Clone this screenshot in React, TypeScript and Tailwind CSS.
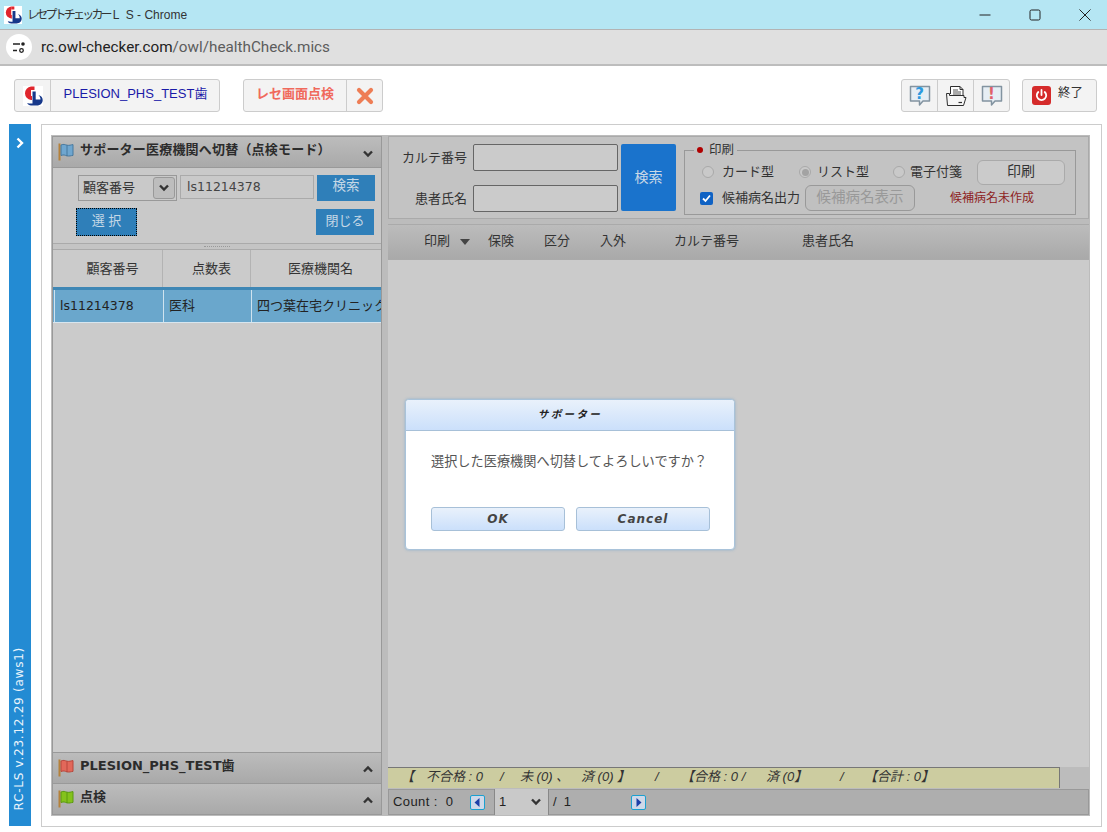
import React from "react";

const jp = "font-['Liberation_Sans','Noto_Sans_CJK_JP',sans-serif]";

function Logo({ size = 20 }: { size?: number }) {
  return (
    <svg width={size} height={size} viewBox="0 0 20 20">
      <rect width="20" height="20" fill="#fff" />
      <path d="M8 0.500A6.800 6.800 0 0 0 8 14z" fill="#e0252c" />
      <path d="M8 .5h3.500v3.500H8zM8 10h1v4H8z" fill="#e0252c" />
      <path d="M9.500 5.500h3.200v8h4.800c0-2-.8-3.500-2.200-4.500 2.800.6 4.400 2.600 4.400 5 0 3.400-2.600 5.500-5.700 5.500H8c-1.800 0-3.200-1-3.800-2.500 2 .6 3.800.6 5.300.4z" fill="#16388a" />
    </svg>
  );
}

function Flag({ color, dark }: { color: string; dark: string }) {
  return (
    <svg width="18" height="18" viewBox="0 0 18 18" className="shrink-0">
      <path d="M1.500 0.500v17" stroke="#b5813a" strokeWidth="2" />
      <path d="M3 2c3-1.200 3.500-.4 6 .2 2.400.5 4-.4 6-.6v10.800c-2 .2-3.600 1-6 .4-2.500-.6-3-1.400-6-.3z" fill={color} />
      <path d="M9 2.200v11M3 2c3-1.200 3.500-.4 6 .2 2.400.5 4-.4 6-.6v10.800c-2 .2-3.600 1-6 .4-2.500-.6-3-1.400-6-.3z" fill="none" stroke={dark} strokeWidth="1" />
    </svg>
  );
}

function Chevron({ up = false }: { up?: boolean }) {
  return (
    <svg width="12" height="8" viewBox="0 0 12 8">
      <path d={up ? "M2 6.500l4-4 4 4" : "M2 1.500l4 4 4-4"} fill="none" stroke="#333" strokeWidth="2.400" />
    </svg>
  );
}

function Bubble({ mark, color }: { mark: string; color: string }) {
  return (
    <span className="relative flex h-[22px] w-[22px]">
      <svg width="22" height="22" viewBox="0 0 22 22">
        <path d="M1.500 1.500h19v14.500h-6.500l-3.500 4v-4h-9z" fill="#e6eef4" stroke="#8293a0" strokeWidth="1.500" strokeLinejoin="round" />
      </svg>
      <span className={`absolute left-0 right-0 top-[-2px] text-center text-[15px] font-bold ${color} font-['DejaVu_Sans',sans-serif]`}>{mark}</span>
    </span>
  );
}

function Printer() {
  return (
    <svg width="22" height="22" viewBox="0 0 22 22" fill="none" stroke="#2e2e2e" strokeWidth="1">
      <path d="M5.500 9V1.500h9.500l3 3v6" fill="#fff" />
      <path d="M15 1.500v3h3" />
      <path d="M8 5h5M8 7h8M8 9h8" stroke="#555" />
      <path d="M1.500 8.500h3v2h14.500v2h2l-2.500 8h-16z" fill="#f6f6f6" />
      <path d="M13.500 17.500h3.500" strokeWidth="1.200" />
    </svg>
  );
}

function Arrow({ right = false }: { right?: boolean }) {
  return (
    <span className="flex h-[15px] w-[15px] items-center justify-center rounded-[2px] border border-[#1ba0d0] bg-[#cfd8e8]">
      <svg width="7" height="9" viewBox="0 0 7 9">
        <path d={right ? "M1.500 0l5 4.500-5 4.500z" : "M5.500 0l-5 4.500 5 4.500z"} fill="#1d3fa8" />
      </svg>
    </span>
  );
}

function Radio({ checked = false }: { checked?: boolean }) {
  return (
    <span className="flex h-[12px] w-[12px] shrink-0 items-center justify-center rounded-full border border-[#a9a9a9] bg-[#c9c9c9]">
      {checked && <span className="h-[7px] w-[7px] rounded-full bg-[#a3a3a3]" />}
    </span>
  );
}

function AccordionBar({ label, color, dark }: { label: string; color: string; dark: string }) {
  return (
    <div className="flex h-[31px] items-center border-t border-[#999] bg-gradient-to-b from-[#bcbcbc] to-[#a9a9a9] pl-[5px] pr-[7px]">
      <Flag color={color} dark={dark} />
      <span className={`ml-[4px] mt-[-4px] text-[13px] font-bold text-[#2c2c2c] font-['DejaVu_Sans','Noto_Sans_CJK_JP',sans-serif]`}>{label}</span>
      <span className="ml-auto mt-[1px]"><Chevron up /></span>
    </div>
  );
}

export default function App() {
  return (
    <div className={`relative h-[832px] w-[1107px] overflow-hidden bg-white ${jp}`}>
      {/* Window title */}
      <div className="flex h-[30px] items-center border-b border-[#b3b3b3] bg-[#b5e6f3] pl-[4px]">
        <Logo size={18} />
        <span className="ml-[5px] whitespace-pre text-[12px] text-[#333]">
          <span className="tracking-[-2.800px]">レセプトチェッカー</span>
          <span className="ml-[3px]">L  S - Chrome</span>
        </span>
        <div className="ml-auto flex items-center">
          <svg width="14" height="14" viewBox="0 0 14 14" className="mr-[36px]"><path d="M1.500 7h11" stroke="#222" strokeWidth="1" /></svg>
          <svg width="14" height="14" viewBox="0 0 14 14" className="mr-[36px]"><rect x="2" y="2" width="10" height="10" rx="1.500" fill="none" stroke="#222" strokeWidth="1" /></svg>
          <svg width="14" height="14" viewBox="0 0 14 14" className="mr-[15px]"><path d="M1.500 1.500l11 11M12.500 1.500l-11 11" stroke="#222" strokeWidth="1" /></svg>
        </div>
      </div>
      {/* Address */}
      <div className="flex h-[36px] items-center border-b-2 border-[#bdbdbd] bg-[#e0e0e0] pl-[6px]">
        <span className="flex h-[26px] w-[26px] items-center justify-center rounded-full bg-white">
          <svg width="14" height="14" viewBox="0 0 14 14" fill="none" stroke="#222" strokeWidth="1.300">
            <path d="M1 4h7M1 10.500h4" />
            <circle cx="11" cy="4" r="1.800" fill="#222" stroke="none" />
            <circle cx="9.500" cy="10.500" r="1.800" />
          </svg>
        </span>
        <span className="ml-[9px] font-['Roboto','Noto_Sans',sans-serif] text-[15.250px] text-[#5c5c5c]">
          <span className="text-[#222]">rc.owl-checker.com</span>/owl/healthCheck.mics
        </span>
      </div>
      {/* Toolbar */}
      <div className="flex h-[58px] items-start pl-[14px] pt-[13px]">
        <div className="flex h-[33px] w-[206px] rounded-[3px] border border-[#ccc] bg-[#f3f3f3]">
          <span className="flex w-[36px] items-center justify-center border-r border-[#ccc]"><Logo size={20} /></span>
          <span className="flex flex-1 items-center justify-center pb-[4px] pl-[1px] text-[13px] text-[#1a1aa8]">PLESION_PHS_TEST歯</span>
        </div>
        <div className="ml-[23px] flex h-[33px] w-[140px] rounded-[3px] border border-[#ccc] bg-[#f3f3f3]">
          <span className="flex w-[103px] items-center justify-center border-r border-[#ccc] pb-[4px] text-[13px] font-bold text-[#f0695c]">レセ画面点検</span>
          <span className="flex flex-1 items-center justify-center">
            <svg width="18" height="18" viewBox="0 0 18 18"><path d="M3 3l12 12M15 3L3 15" stroke="#ee7d55" strokeWidth="4.200" strokeLinecap="round" /></svg>
          </span>
        </div>
        <div className="ml-[518px] flex h-[33px] w-[109px] rounded-[3px] border border-[#ccc] bg-[#f3f3f3]">
          <span className="flex w-[36px] items-center justify-center border-r border-[#ccc]"><Bubble mark="?" color="text-[#2c9adf]" /></span>
          <span className="flex w-[36px] items-center justify-center border-r border-[#ccc]"><Printer /></span>
          <span className="flex flex-1 items-center justify-center"><Bubble mark="!" color="text-[#e0606a]" /></span>
        </div>
        <div className="ml-[12px] flex h-[33px] w-[75px] items-center rounded-[3px] border border-[#ccc] bg-[#f3f3f3] pl-[9px]">
          <span className="flex h-[19px] w-[19px] items-center justify-center rounded-[3px] bg-[#d52b2b]">
            <svg width="13" height="13" viewBox="0 0 13 13" fill="none" stroke="#fff" strokeWidth="1.800" strokeLinecap="round">
              <path d="M6.500 1v5M3.300 3a4.700 4.700 0 1 0 6.400 0" />
            </svg>
          </span>
          <span className="mb-[4px] ml-[7px] text-[12.500px] text-[#333]">終了</span>
        </div>
      </div>
      {/* Main */}
      <div className="flex h-[702px] pl-[9px]">
        <aside className="flex h-[702px] w-[22px] flex-col items-center justify-between bg-[#238bd3] pb-[16px] pt-[13px]">
          <svg width="8" height="12" viewBox="0 0 8 12"><path d="M1.500 1.500L6 6l-4.500 4.500" fill="none" stroke="#fff" strokeWidth="2.400" /></svg>
          <span className="mr-[3px] rotate-180 whitespace-nowrap text-[12px] tracking-[0.750px] text-[#eaf4fb] [writing-mode:vertical-rl] font-['DejaVu_Sans',sans-serif]">RC-LS v.23.12.29 (aws1)</span>
        </aside>
        <div className="ml-[10px] h-[703px] w-[1061px] border border-[#ccc] px-[9px] py-[10px]">
          <div className="flex h-[681px] w-[1039px] gap-[6px] bg-[#bcbcbc] p-[1px]">
            {/* Left panel */}
            <div className="flex h-[679px] w-[330px] flex-col border border-[#999] bg-[#cbcbcb]">
              <div className="flex h-[30px] items-center bg-gradient-to-b from-[#bcbcbc] to-[#a9a9a9] pl-[5px] pr-[7px]">
                <Flag color="#6fa6cf" dark="#47789e" />
                <span className="mb-[4px] ml-[4px] text-[13px] font-bold tracking-[0.200px] text-[#2c2c2c]">サポーター医療機関へ切替（点検モード）</span>
                <span className="ml-auto mt-[3px]"><Chevron /></span>
              </div>
              <div className="flex h-[76px] flex-col border-t border-[#999] bg-[#c9c9c9] pl-[23px] pr-[6px] pt-[7px]">
                <div className="flex items-start">
                  <div className="ml-[2px] flex h-[26px] w-[99px] items-center border border-[#999] pl-[4px]">
                    <span className="text-[13px] text-[#333]">顧客番号</span>
                    <span className="ml-auto mr-[1px] flex h-[22px] w-[22px] items-center justify-center rounded-[3px] border border-[#999] bg-[#bdbdbd]"><Chevron /></span>
                  </div>
                  <div className="ml-[3px] flex h-[24px] w-[134px] items-center border border-[#aaa] pl-[6px] font-['DejaVu_Sans',sans-serif] text-[12.500px] text-[#444]">ls11214378</div>
                  <button className="ml-[3px] h-[26px] w-[58px] bg-[#2f7fb9] pb-[4px] text-[13.500px] text-[#c5d8e6]">検索</button>
                </div>
                <div className="mt-[7px] flex items-start justify-between">
                  <button className="h-[28px] w-[61px] border border-dotted border-black bg-[#2f7fb9] pb-[3px] text-[13px] text-[#c5d8e6]">選 択</button>
                  <button className="mr-[1px] mt-[1px] h-[26px] w-[58px] bg-[#2f7fb9] pb-[3px] text-[13px] text-[#c5d8e6]">閉じる</button>
                </div>
              </div>
              <div className="flex h-[7px] items-center justify-center border-y border-[#aaa] bg-[#c4c4c4]">
                <span className="w-[26px] border-t border-dotted border-[#999]" />
              </div>
              <div className="flex h-[40px] border-b-[3px] border-[#3f87b5] bg-[#cbcbcb] text-center text-[13px] leading-[38px] text-[#333]">
                <span className="w-[110px] shrink-0 border-r border-[#b3b3b3] pl-[10px]">顧客番号</span>
                <span className="w-[88px] shrink-0 border-r border-[#b3b3b3] pl-[10px]">点数表</span>
                <span className="flex-1 pl-[9px]">医療機関名</span>
              </div>
              <div className="flex h-[33px] overflow-hidden border-b border-[#d8e6ef] bg-[#6aa7cc] text-[13px] leading-[32px] text-[#222]">
                <span className="ml-[1px] w-[110px] shrink-0 border-x border-[#cfe3ef] pl-[5px] font-['DejaVu_Sans',sans-serif] text-[12.500px]">ls11214378</span>
                <span className="w-[88px] shrink-0 border-r border-[#cfe3ef] pl-[5px]">医科</span>
                <span className="min-w-0 flex-1 whitespace-nowrap pl-[5px]">四つ葉在宅クリニック</span>
              </div>
              <div className="flex-1" />
              <AccordionBar label="PLESION_PHS_TEST歯" color="#e2685a" dark="#b8473c" />
              <AccordionBar label="点検" color="#84c21c" dark="#5b9a10" />
            </div>
            {/* Right panel */}
            <div className="flex h-[679px] w-[701px] flex-col">
              <div className="flex h-[83px] border border-[#aaa] bg-[#c3c3c3] pt-[7px]">
                <div className="flex flex-col gap-[14px]">
                  <div className="flex items-center gap-[6px]">
                    <span className="w-[78px] text-right text-[13px] text-[#333]">カルテ番号</span>
                    <span className="h-[27px] w-[145px] rounded-[2px] border border-[#666] bg-[#cbcbcb]" />
                  </div>
                  <div className="flex items-center gap-[6px]">
                    <span className="w-[78px] text-right text-[13px] text-[#333]">患者氏名</span>
                    <span className="h-[27px] w-[145px] rounded-[2px] border border-[#666] bg-[#cbcbcb]" />
                  </div>
                </div>
                <button className="ml-[3px] h-[67px] w-[55px] rounded-[2px] bg-[#1a73cc] text-[14px] text-[#c9d8e6]">検索</button>
                <fieldset className="ml-[8px] mt-[-1px] h-[72px] w-[392px] border border-[#999] pl-[17px]">
                  <legend className="ml-[-8px] flex items-center px-[3px] text-[12.500px] leading-[14px] text-[#333]">
                    <span className="mr-[6px] h-[6px] w-[6px] rounded-full bg-[#b00000]" />印刷
                  </legend>
                  <div className="mt-[2px] flex h-[26px] items-center text-[13px] text-[#333]">
                    <Radio /><span className="ml-[8px] w-[77px]">カード型</span>
                    <Radio checked /><span className="ml-[6px] w-[76px]">リスト型</span>
                    <Radio /><span className="ml-[5px] w-[53px]">電子付箋</span>
                    <span className="ml-[14px] flex h-[25px] w-[88px] items-center justify-center rounded-[6px] border border-[#aaa] bg-[#cbcbcb] pb-[2px] text-[14px]">印刷</span>
                  </div>
                  <div className="ml-[-2px] flex h-[26px] items-center text-[13px] text-[#333]">
                    <span className="flex h-[13px] w-[13px] shrink-0 items-center justify-center rounded-[2px] bg-[#0f62c4]">
                      <svg width="9" height="9" viewBox="0 0 9 9"><path d="M1 4.500l2.500 2.500L8 1.500" fill="none" stroke="#fff" strokeWidth="1.800" /></svg>
                    </span>
                    <span className="ml-[9px] whitespace-nowrap">候補病名出力</span>
                    <span className="ml-[5px] flex h-[26px] w-[110px] shrink-0 items-center justify-center rounded-[6px] border border-[#999] bg-[#c0c0c0] text-[14.500px] text-[#999]">候補病名表示</span>
                    <span className="ml-[35px] whitespace-nowrap text-[12px] text-[#8e1f1f]">候補病名未作成</span>
                  </div>
                </fieldset>
              </div>
              <div className="mt-[5px] flex h-[36px] items-center border-y border-[#aaa] bg-gradient-to-b from-[#bcbcbc] to-[#a9a9a9] pb-[2px] text-[13px] text-[#333]">
                <span className="ml-[36px]">印刷</span>
                <svg width="10" height="6" viewBox="0 0 10 6" className="ml-[10px] mt-[2px]"><path d="M0 0h10L5 6z" fill="#444" /></svg>
                <span className="ml-[18px]">保険</span>
                <span className="ml-[30px]">区分</span>
                <span className="ml-[30px]">入外</span>
                <span className="ml-[48px]">カルテ番号</span>
                <span className="ml-[63px]">患者氏名</span>
              </div>
              <div className="flex-1 bg-[#cbcbcb]" />
              <div className="flex h-[21px] w-[672px] items-center whitespace-nowrap border-r border-t border-[#777] bg-[#cccca0] pb-[3px] pl-[13px] text-[13px] italic text-[#333]">
                <span className="w-[25px]">【</span>
                <span className="w-[74px]">不合格 : 0</span>
                <span className="w-[20px]">/</span>
                <span className="w-[61px]">未 (0) 、</span>
                <span className="w-[74px]">済 (0) 】</span>
                <span className="w-[26px]">/</span>
                <span className="w-[85px]">【合格 : 0 /</span>
                <span className="w-[74px]">済 (0】</span>
                <span className="w-[24px]">/</span>
                <span>【合計 : 0】</span>
              </div>
              <div className="mt-[1px] flex h-[26px] items-center border border-[#999] bg-[#aeaeae] pl-[4px] text-[13px] text-[#222]">
                <span className="w-[64px] whitespace-pre tracking-[0.400px]">Count :  0</span>
                <span className="ml-[13px]"><Arrow /></span>
                <span className="ml-[9px] flex h-[26px] w-[55px] items-center border-x border-[#888] bg-[#c9c9c9] pl-[4px]">1
                  <span className="ml-auto mr-[6px]"><Chevron /></span>
                </span>
                <span className="ml-[4px] whitespace-pre">/  1</span>
                <span className="ml-[60px]"><Arrow right /></span>
              </div>
            </div>
          </div>
        </div>
      </div>
      {/* Dialog */}
      <div className="absolute left-[405px] top-[399px] h-[151px] w-[330px] overflow-hidden rounded-[4px] border border-[#a9c3da] bg-white shadow-[0_0_3px_#8fb0cc]">
        <div className="flex h-[31px] items-center justify-center border-b border-[#a7c0d8] bg-gradient-to-b from-[#e9f1fb] to-[#cbe0fb] text-[10.500px] font-bold italic tracking-[2.400px] text-[#222]">サポーター</div>
        <div className="pl-[25px] pt-[21px] text-[13.200px] text-[#555]">選択した医療機関へ切替してよろしいですか？</div>
        <div className="mt-[35px] flex gap-[11px] pl-[25px]">
          <button className="h-[24px] w-[134px] rounded-[3px] border border-[#a7c0d8] bg-gradient-to-b from-[#e9f1fb] to-[#cbe0fb] font-['DejaVu_Sans',sans-serif] text-[12px] font-bold italic tracking-[1px] text-[#444]">OK</button>
          <button className="h-[24px] w-[134px] rounded-[3px] border border-[#a7c0d8] bg-gradient-to-b from-[#e9f1fb] to-[#cbe0fb] font-['DejaVu_Sans',sans-serif] text-[12px] font-bold italic tracking-[1px] text-[#444]">Cancel</button>
        </div>
      </div>
    </div>
  );
}
